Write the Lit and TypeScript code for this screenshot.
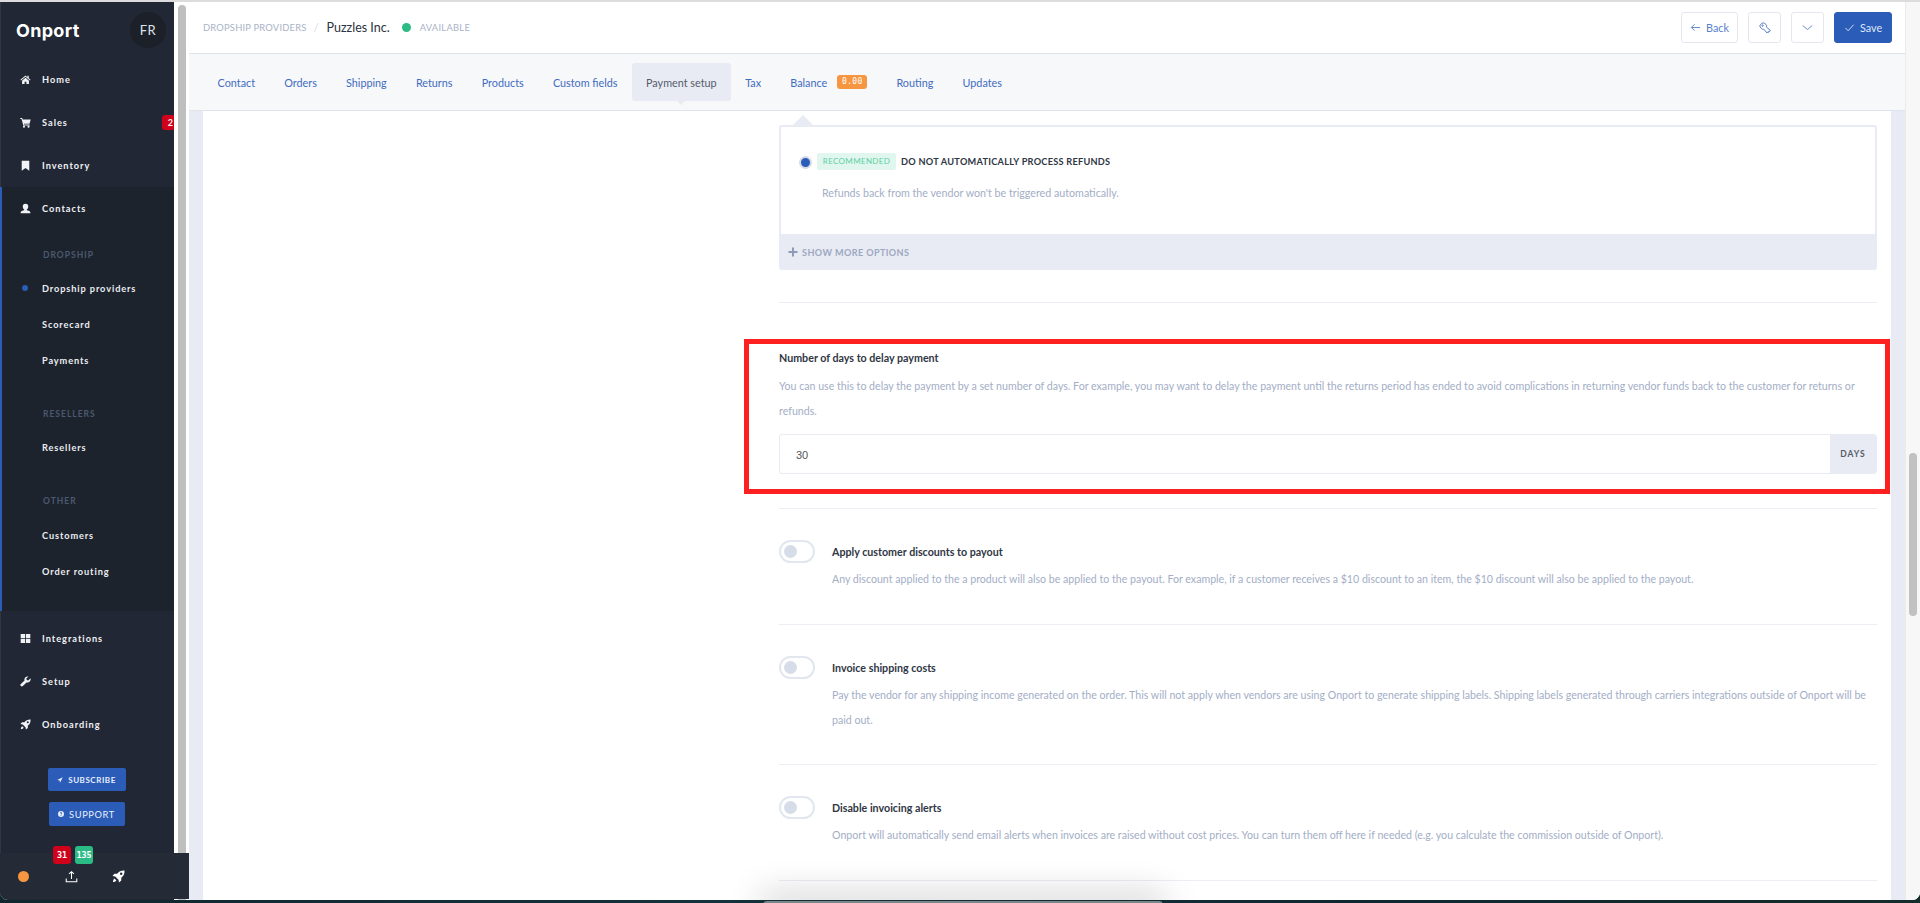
import { LitElement, html, css, svg } from "lit";
import { customElement } from "lit/decorators.js";

const ic = {
  home: svg`<path d="M8 2.2 .6 8.400l.9 1L8 3.900l6.500 5.500.9-1-2.700-2.300V2.600h-1.900v2.300zM3 9.700V14.400h3.700v-3.200h2.600v3.200H13V9.700L8 5.500z"/>`,
  cart: svg`<path d="M.4 1.600h2.900l.6 2H15.600l-1.800 6.200H5.700l.3 1.200h8v1.400H4.800L2.300 3H.4z"/><circle cx="5.800" cy="14" r="1.500"/><circle cx="12.400" cy="14" r="1.500"/>`,
  bookmark: svg`<path d="M2.500 1h11v14.500L8 11.700 2.500 15.500z"/>`,
  user: svg`<path d="M8 1.200a4 4 0 0 1 4 4.100c0 1.700-1 3.400-2.100 4.100v1c2.200.5 5.100 1.300 5.100 2.700v1.700H1v-1.700c0-1.400 2.900-2.200 5.100-2.700v-1C5 8.700 4 7 4 5.300a4 4 0 0 1 4-4.100z"/>`,
  grid: svg`<path d="M1 1.500h6.400v6H1zM8.600 1.500H15v6H8.600zM1 8.700h6.400v6H1zM8.600 8.700H15v6H8.600z"/>`,
  wrench: svg`<path d="M15.200 3.400 12 6.400l-2.200-.6-.6-2.200L12.400.8A4.600 4.600 0 0 0 6.600 6.400L1.200 11.800a2 2 0 0 0 2.900 2.900L9.500 9.300a4.600 4.600 0 0 0 5.700-5.900z"/>`,
  rocket: svg`<path d="M15.400.600c-3.800-.2-6.800 1-9 4H3L.6 7.400l3.400.6 4 4 .6 3.400 2.800-2.400V9.600C14.400 7.400 15.600 4.400 15.400.600zM11.300 3.200a1.500 1.500 0 1 1 0 3 1.500 1.500 0 0 1 0-3zM3.200 10.600c-1.100.6-1.900 2-2 4.200 2.200-.1 3.600-.9 4.200-2z"/>`,
  send: svg`<path d="M15.500.500.500 8.200l6.500 1 .9 6.300z"/>`,
  help: svg`<path fill-rule="evenodd" d="M8 0a8 8 0 1 1 0 16A8 8 0 0 1 8 0zM5 6.200h2c0-.7.400-1.100 1-1.100s1 .4 1 .9c0 1-2 1.300-2 3.500h2c0-1.400 2.100-1.700 2.100-3.700 0-1.500-1.300-2.500-3.100-2.500S5 4.400 5 6.200zM7 10.500v2h2v-2z"/>`,
};
const icon = (p: unknown, c = "ic") => html`<svg class=${c} viewBox="0 0 16 16" fill="currentColor" aria-hidden="true">${p}</svg>`;

@customElement("app-root")
export class AppRoot extends LitElement {
  static styles = css`
    :host { display: block; width: 1920px; height: 903px; overflow: hidden; position: relative; font-family: "Lato", sans-serif; background: linear-gradient(90deg,#10272f,#14343d 45%,#0f2830 70%,#142c2c); }
    * { box-sizing: border-box; }
    .window { display: flex; height: 900px; background: #f7f8fa; border-top: 2px solid #dcdcdf; border-radius: 0 0 8px 8px; overflow: hidden; position: relative; }
    .side { width: 174px; flex: none; background: #212734; color: #fff; display: flex; flex-direction: column; border-left: 1px solid #31363f; height: 100%; }
    .brand { height: 56px; flex: none; display: flex; align-items: center; justify-content: space-between; padding: 0 8px 0 15px; }
    .logo { font-size: 18px; font-weight: 700; letter-spacing: .3px; font-family: "Inter", sans-serif; }
    .fr { width: 36px; height: 36px; border-radius: 50%; background: #1b2029; font-size: 13px; letter-spacing: .4px; display: grid; place-items: center; color: #dfe2e8; }
    .item { height: 43px; flex: none; display: flex; align-items: center; padding-left: 19px; gap: 11px; font-size: 9.200px; font-weight: 700; letter-spacing: 1px; position: relative; color: #f1f2f5; }
    .ic { width: 11px; height: 11px; flex: none; }
    .badge2 { position: absolute; right: 0; top: 14px; width: 12px; height: 15px; background: #d0021b; border-radius: 3px 0 0 3px; font-size: 9px; line-height: 15px; text-align: right; padding-right: 1px; letter-spacing: 0; }
    .group { background: #1d232d; border-left: 2px solid #2a5cb8; margin: 0 0 6px -1px; height: 424px; flex: none; }
    .group .item { padding-left: 18px; }
    .grp { font-size: 8.500px; font-weight: 700; letter-spacing: 1px; color: #4a596f; padding-left: 41px; height: 12px; line-height: 12px; margin: 29.500px 0 10px; }
    .grp.first { margin: 19px 0 9px; }
    .link { height: 36px; display: flex; align-items: center; padding-left: 40px; font-size: 9.200px; font-weight: 700; letter-spacing: .9px; color: #eceef2; position: relative; }
    .dot { position: absolute; left: 20px; top: 15px; width: 6px; height: 6px; border-radius: 50%; background: #2a5cb8; }
    .sbtns { display: flex; flex-direction: column; align-items: center; gap: 11px; margin-top: 22px; padding-right: 2px; flex: none; }
    .sbtn { background: #2a5cb8; color: #e8eefb; border-radius: 2px; display: flex; align-items: center; justify-content: center; font-weight: 700; gap: 5px; }
    .sbtn.a { width: 78px; height: 23px; font-size: 8px; letter-spacing: .55px; }
    .sbtn.b { width: 76px; height: 24px; font-size: 9.300px; letter-spacing: .6px; font-weight: 400; }
    .sbtn svg { width: 6px; height: 6px; }
    .dock { position: absolute; left: 0; top: 853px; width: 189px; height: 46px; background: #252a37; border-radius: 0 0 0 8px; color: #fff; }
    .dock .o { position: absolute; left: 18px; top: 18px; width: 11px; height: 11px; border-radius: 50%; background: #f79640; }
    .dock svg { position: absolute; top: 17px; width: 13px; height: 13px; }
    .dock svg.up { left: 65px; fill: none; stroke: currentColor; stroke-width: 1.300; }
    .dock svg.rk { left: 112px; fill: currentColor; }
    .cnt { position: absolute; top: -7px; width: 18px; height: 18px; border-radius: 3px; font-size: 8.500px; font-weight: 700; color: #fff; text-align: center; line-height: 18px; font-family: "DejaVu Sans Mono", monospace; letter-spacing: -.2px; }
    .cnt.r { left: 53px; background: #d0021b; }
    .cnt.g { left: 75px; background: #2dbb85; }
    .scroll { width: 15px; flex: none; background: #fff; position: relative; }
    .scroll i { position: absolute; left: 4px; top: 3px; bottom: 0; width: 8px; background: #bfbfbf; border-radius: 4px 4px 0 0; }
    .main { flex: 1; min-width: 0; display: flex; flex-direction: column; position: relative; }
    .head { height: 52px; flex: none; background: #fff; border-bottom: 1px solid #dfe3eb; display: flex; align-items: center; padding: 0 13px 0 14px; margin-right: 15px; }
    .crumb { font-size: 9.400px; letter-spacing: .2px; color: #a9b3c7; }
    .sl { color: #d7dce6; margin: 0 7.500px 0 7px; font-size: 12px; }
    .title { font-size: 12.500px; color: #2c3340; }
    .st { width: 9px; height: 9px; border-radius: 50%; background: #2dbb85; margin: 0 9px 0 12px; }
    .avail { font-size: 9.300px; letter-spacing: .3px; color: #a9b3c7; }
    .acts { margin-left: auto; display: flex; gap: 10px; }
    .btn { height: 31px; border: 1px solid #e4e7ef; border-radius: 3px; background: #fff; color: #5a7fc9; font-size: 10.800px; display: flex; align-items: center; justify-content: center; gap: 5px; }
    .btn.back { width: 57px; }
    .btn.sq { width: 33px; }
    .btn.save { width: 58px; background: #2a5cb8; border-color: #2a5cb8; color: #dfe7f7; }
    .btn svg { width: 11px; height: 11px; fill: none; stroke: currentColor; stroke-width: 1; }
    .btn svg.key { width: 12px; height: 12px; }
    .tabs { height: 57px; flex: none; border-bottom: 1px solid #dfe3eb; display: flex; align-items: center; padding-left: 14px; margin-right: 15px; }
    .tab { font-size: 10.800px; color: #3f6cc0; padding: 0 14.600px; height: 38px; display: flex; align-items: center; gap: 10px; position: relative; border-radius: 3px; white-space: nowrap; }
    .tab.on { background: #e8ebf3; color: #555b6b; padding: 0 14px; }
    .tab.on::after { content: ""; position: absolute; left: 50%; bottom: -4px; margin-left: -4px; border: 4px solid transparent; border-top-color: #e8ebf3; border-bottom: 0; }
    .bal { background: #f79640; color: #fff; border-radius: 3px; font-family: "DejaVu Sans Mono", monospace; font-size: 8px; width: 30px; text-align: center; height: 14px; line-height: 14px; letter-spacing: .3px; }
    .body { flex: 1; min-height: 0; display: flex; background: #e8ebf3; padding: 0 15px 0 14px; }
    .panel { flex: 1; background: #fff; padding-left: 576px; margin-right: 14px; display: flex; flex-direction: column; min-width: 0; }
    .box { margin-top: 14px; border: 2px solid #e8ebf3; border-bottom: 0; border-radius: 3px; height: 145px; position: relative; display: flex; flex-direction: column; width: 1098px; flex: none; }
    .box::before { content: ""; position: absolute; left: 12px; top: -12px; width: 0; height: 0; border: 10px solid transparent; border-top: 0; border-bottom-color: #e8ebf3; }
    .ropt { height: 107px; padding-top: 26px; flex: none; }
    .rline { display: flex; align-items: center; }
    .radio { width: 13px; height: 13px; border-radius: 50%; background: #2a5cb8; border: 2px solid #d5dae6; margin: 1px 5px 0 18px; flex: none; }
    .rec { background: #e0f6ee; color: #5dcfa4; font-size: 8px; letter-spacing: .35px; height: 17px; line-height: 17px; width: 79px; text-align: center; border-radius: 2px; margin-right: 5px; }
    .rt { font-size: 9.200px; font-weight: 700; color: #2f3644; letter-spacing: .25px; }
    .rdesc { font-size: 10.700px; color: #a3aec6; margin: 15.500px 0 0 41px; }
    .more { flex: 1; background: #e8ebf3; display: flex; align-items: center; padding-left: 7px; gap: 4px; font-size: 9.100px; letter-spacing: .4px; font-weight: 700; color: #9ca8c2; }
    .more svg { width: 10px; height: 10px; fill: #8d9ab8; }
    .rule { height: 1px; background: #eceef4; width: 1098px; flex: none; }
    .rule.top { margin-top: 32px; }
    .sec { width: 1098px; flex: none; }
    .field { position: relative; margin: 48px 0 34px; }
    .frame { position: absolute; left: -35px; right: -13px; top: -12px; bottom: -20px; border: 5px solid #fd2020; pointer-events: none; }
    .flabel { font-size: 10.700px; font-weight: 700; color: #2f3644; line-height: 14px; }
    .fdesc { font-size: 10.630px; color: #a3aec6; line-height: 25px; margin-top: 8.500px; }
    .input { margin-top: 10.500px; height: 40px; border: 1px solid #e8ebf3; border-radius: 3px; display: flex; overflow: hidden; }
    .val { flex: 1; padding-left: 16px; font-size: 11px; color: #555; line-height: 40px; font-family: "Liberation Sans", sans-serif; }
    .unit { width: 46px; background: #e8ebf3; display: grid; place-items: center; font-size: 8.500px; font-weight: 700; letter-spacing: 1px; color: #555b66; }
    .opt { display: grid; grid-template-columns: 36px 1fr; column-gap: 17px; margin: 31px 0 31.700px; }
    .tog { width: 36px; height: 23px; border: 2px solid #e2e6ee; border-radius: 12px; background: #fff; position: relative; }
    .tog::after { content: ""; position: absolute; left: 3px; top: 3px; width: 13px; height: 13px; border-radius: 50%; background: #d6dde8; }
    .otitle { font-size: 10.700px; font-weight: 700; color: #2f3644; line-height: 23px; }
    .odesc { grid-column: 2; font-size: 10.620px; color: #a3aec6; line-height: 25px; margin-top: 4px; }
    .bar { position: absolute; right: 0; top: -2px; bottom: 0; width: 15px; background: #f7f7f7; border-left: 1px solid #ebebeb; }
    .bar i { position: absolute; left: 3px; top: 453px; width: 8px; height: 163px; border-radius: 4px; background: #c1c1c1; }
    .shade { position: absolute; left: 763px; width: 400px; top: 901px; height: 4px; background: #7b8689; border-radius: 6px 6px 0 0; box-shadow: 0 0 34px 4px rgba(0,0,0,.32); }
  `;

  render() {
    const tabs = ["Contact", "Orders", "Shipping", "Returns", "Products", "Custom fields"];
    return html`
      <div class="window">
        <aside class="side">
          <div class="brand"><span class="logo">Onport</span><span class="fr">FR</span></div>
          <div class="item">${icon(ic.home)}Home</div>
          <div class="item">${icon(ic.cart)}Sales<span class="badge2">2</span></div>
          <div class="item">${icon(ic.bookmark)}Inventory</div>
          <div class="group">
            <div class="item">${icon(ic.user)}Contacts</div>
            <div class="grp first">DROPSHIP</div>
            <div class="link"><span class="dot"></span>Dropship providers</div>
            <div class="link">Scorecard</div>
            <div class="link">Payments</div>
            <div class="grp">RESELLERS</div>
            <div class="link">Resellers</div>
            <div class="grp">OTHER</div>
            <div class="link">Customers</div>
            <div class="link">Order routing</div>
          </div>
          <div class="item">${icon(ic.grid)}Integrations</div>
          <div class="item">${icon(ic.wrench)}Setup</div>
          <div class="item">${icon(ic.rocket)}Onboarding</div>
          <div class="sbtns">
            <div class="sbtn a">${icon(ic.send, "")}SUBSCRIBE</div>
            <div class="sbtn b">${icon(ic.help, "")}SUPPORT</div>
          </div>
        </aside>
        <div class="scroll"><i></i></div>
        <main class="main">
          <header class="head">
            <span class="crumb">DROPSHIP PROVIDERS</span><span class="sl">/</span><span class="title">Puzzles Inc.</span><span class="st"></span><span class="avail">AVAILABLE</span>
            <div class="acts">
              <div class="btn back"><svg viewBox="0 0 12 12"><path d="M11 6H1.500M5 2.500 1.500 6 5 9.500"/></svg>Back</div>
              <div class="btn sq"><svg class="key" viewBox="0 0 12 12"><path d="M1 3.200 3.200 1H5.400L7.600 3.400 7.400 5 11.200 8.200 10.800 9.400 9.800 9.200 9.500 10.400 8.400 10.200 8 11 4.800 7.200H3.400L1 5z"/><circle cx="3.600" cy="3.600" r=".7"/></svg></div>
              <div class="btn sq"><svg viewBox="0 0 12 12"><path d="M.8 3.800 6 8.200l5.200-4.400"/></svg></div>
              <div class="btn save"><svg viewBox="0 0 12 12"><path d="M1.500 6.500 4.500 9.500 10.500 3"/></svg>Save</div>
            </div>
          </header>
          <nav class="tabs">
            ${tabs.map((t) => html`<div class="tab">${t}</div>`)}
            <div class="tab on">Payment setup</div>
            <div class="tab">Tax</div>
            <div class="tab">Balance<span class="bal">0.00</span></div>
            <div class="tab">Routing</div>
            <div class="tab">Updates</div>
          </nav>
          <div class="body">
            <div class="panel">
              <div class="box">
                <div class="ropt">
                  <div class="rline"><span class="radio"></span><span class="rec">RECOMMENDED</span><span class="rt">DO NOT AUTOMATICALLY PROCESS REFUNDS</span></div>
                  <div class="rdesc">Refunds back from the vendor won't be triggered automatically.</div>
                </div>
                <div class="more"><svg viewBox="0 0 10 10"><path d="M4 .5h2v3.500h3.500v2H6v3.500H4V6H.5V4H4z"/></svg>SHOW MORE OPTIONS</div>
              </div>
              <div class="rule top"></div>
              <div class="sec field">
                <div class="frame"></div>
                <div class="flabel">Number of days to delay payment</div>
                <div class="fdesc">You can use this to delay the payment by a set number of days. For example, you may want to delay the payment until the returns period has ended to avoid complications in returning vendor funds back to the customer for returns or refunds.</div>
                <div class="input"><div class="val">30</div><div class="unit">DAYS</div></div>
              </div>
              <div class="rule"></div>
              <div class="sec opt">
                <div class="tog"></div><div class="otitle">Apply customer discounts to payout</div>
                <div class="odesc">Any discount applied to the a product will also be applied to the payout. For example, if a customer receives a $10 discount to an item, the $10 discount will also be applied to the payout.</div>
              </div>
              <div class="rule"></div>
              <div class="sec opt">
                <div class="tog"></div><div class="otitle">Invoice shipping costs</div>
                <div class="odesc">Pay the vendor for any shipping income generated on the order. This will not apply when vendors are using Onport to generate shipping labels. Shipping labels generated through carriers integrations outside of Onport will be paid out.</div>
              </div>
              <div class="rule"></div>
              <div class="sec opt">
                <div class="tog"></div><div class="otitle">Disable invoicing alerts</div>
                <div class="odesc">Onport will automatically send email alerts when invoices are raised without cost prices. You can turn them off here if needed (e.g. you calculate the commission outside of Onport).</div>
              </div>
              <div class="rule"></div>
            </div>
          </div>
          <div class="bar"><i></i></div>
        </main>
      </div>
      <div class="shade"></div>
      <div class="dock">
        <span class="o"></span>
        <span class="cnt r">31</span>
        <span class="cnt g">135</span>
        <svg class="up" viewBox="0 0 16 16"><path d="M8 11V2M5 4.800 8 2l3 2.800M1.500 10.500v4h13v-4"/></svg>
        <svg class="rk" viewBox="0 0 16 16">${ic.rocket}</svg>
      </div>
    `;
  }
}
